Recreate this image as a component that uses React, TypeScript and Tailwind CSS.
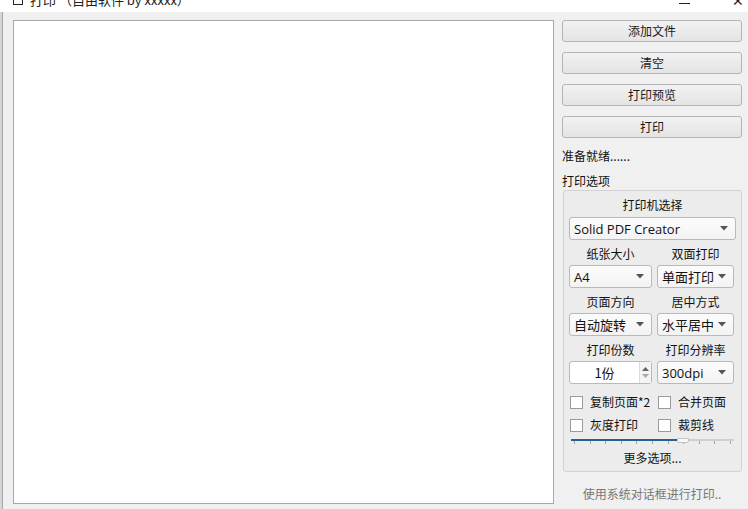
import { ReactNode } from "react";

const cjk = "font-['Microsoft_YaHei','Noto_Sans_CJK_SC',sans-serif]";

function Button({ children }: { children: ReactNode }) {
  return (
    <div className="flex h-[22px] items-center justify-center rounded-[3px] border border-[#b4b4b4] bg-gradient-to-b from-[#f2f2f2] to-[#e4e4e4] text-[12px] leading-[16px] text-[#1a1a1a]">
      {children}
    </div>
  );
}

function Caret() {
  return (
    <svg width="8" height="5" viewBox="0 0 8 5" className="shrink-0">
      <path d="M0 0 L8 0 L4 4.5 Z" fill="#555" />
    </svg>
  );
}

function Select({ value, latin }: { value: string; latin?: boolean }) {
  return (
    <div className="flex h-[23px] items-center justify-between rounded-[3px] border border-[#b9b9b9] bg-gradient-to-b from-[#fcfcfc] to-[#f3f3f3] pl-[4px] pr-[7px]">
      <span
        className={
          latin
            ? "font-['Open_Sans',sans-serif] text-[13px] leading-[16px] text-[#111]"
            : "text-[13px] leading-[16px] text-[#111]"
        }
      >
        {value}
      </span>
      <Caret />
    </div>
  );
}

function Check({ label }: { label: string }) {
  return (
    <div className="flex h-[14px] items-center gap-[7px]">
      <div className="h-[13px] w-[13px] border border-[#9a9a9a] bg-white" />
      <span className="text-[12px] leading-[14px] text-[#111]">{label}</span>
    </div>
  );
}

function Label({ children }: { children: ReactNode }) {
  return <div className="text-center text-[12px] leading-[16px] text-[#111]">{children}</div>;
}

export default function App() {
  return (
    <div className={`flex h-[509px] w-[748px] flex-col overflow-hidden bg-[#f0f0f0] ${cjk}`}>
      {/* title bar, cut off at the top */}
      <div className="-mt-[12px] flex h-[24px] shrink-0 items-center bg-white pl-[13px] pr-[4px]">
        <div className="h-[10px] w-[10px] border border-[#222]" />
        <span className="ml-[7px] text-[13px] leading-[16px] text-[#222]">打印 （自由软件 by xxxxx）</span>
        <div className="ml-auto flex items-center gap-[42px]">
          <div className="mt-[6px] h-[1px] w-[11px] bg-[#222]" />
          <span className="text-[14px] leading-[16px] text-[#222]">✕</span>
        </div>
      </div>

      <div className="flex min-h-0 flex-1">
        {/* desktop edge */}
        <div className="w-[2px] bg-[#d6d6d6]" />
        <div className="w-[1px] bg-[#a8a8a8]" />

        <div className="flex flex-1 gap-[8px] pb-[5px] pl-[10px] pr-[6px] pt-[8px]">
          <div className="w-[541px] border border-[#a8a8a8] bg-white" />

          <div className="flex w-[180px] flex-col">
            <div className="flex flex-col gap-[10px]">
              <Button>添加文件</Button>
              <Button>清空</Button>
              <Button>打印预览</Button>
              <Button>打印</Button>
            </div>
            <div className="mt-[10px] text-[12px] leading-[16px] text-[#111]">准备就绪......</div>
            <div className="mt-[9px] text-[12px] leading-[16px] text-[#111]">打印选项</div>

            <div className="ml-[1px] mt-[1px] flex flex-col rounded-[3px] border border-[#d2d2d2] bg-[#ececec] px-[5px] pb-[5px] pt-[6px]">
              <Label>打印机选择</Label>
              <div className="mt-[4px]">
                <Select value="Solid PDF Creator" latin />
              </div>

              <div className="mt-[6px] grid grid-cols-[83px_77px] gap-x-[5px]">
                <Label>纸张大小</Label>
                <Label>双面打印</Label>
                <div className="mt-[3px]">
                  <Select value="A4" latin />
                </div>
                <div className="mt-[3px]">
                  <Select value="单面打印" />
                </div>
              </div>

              <div className="mt-[6px] grid grid-cols-[83px_77px] gap-x-[5px]">
                <Label>页面方向</Label>
                <Label>居中方式</Label>
                <div className="mt-[3px]">
                  <Select value="自动旋转" />
                </div>
                <div className="mt-[3px]">
                  <Select value="水平居中" />
                </div>
              </div>

              <div className="mt-[6px] grid grid-cols-[83px_77px] gap-x-[5px]">
                <Label>打印份数</Label>
                <Label>打印分辨率</Label>
                <div className="mt-[3px] flex h-[23px] rounded-[3px] border border-[#b9b9b9] bg-white">
                  <div className="flex flex-1 items-center justify-center text-[13px] leading-[16px] text-[#111]">1份</div>
                  <div className="flex w-[12px] flex-col items-center justify-center gap-[3px] border-l border-[#dcdcdc] bg-[#f4f4f4]">
                    <svg width="7" height="4" viewBox="0 0 7 4">
                      <path d="M0 4 L7 4 L3.5 0 Z" fill="#666" />
                    </svg>
                    <svg width="7" height="4" viewBox="0 0 7 4">
                      <path d="M0 0 L7 0 L3.5 4 Z" fill="#aaa" />
                    </svg>
                  </div>
                </div>
                <div className="mt-[3px]">
                  <Select value="300dpi" latin />
                </div>
              </div>

              <div className="mt-[11px] grid grid-cols-[88px_80px] gap-y-[9px] pl-[1px]">
                <Check label="复制页面*2" />
                <Check label="合并页面" />
                <Check label="灰度打印" />
                <Check label="裁剪线" />
              </div>

              {/* slider */}
              <div className="relative mx-[2px] mt-[5px] h-[8px]">
                <div className="absolute left-0 right-0 top-[2px] h-[2px] bg-[#cfcfcf]" />
                <div className="absolute left-0 top-[2px] h-[2px] w-[106px] bg-[#2a5f95]" />
                <div className="absolute left-0 right-0 top-[4px] flex justify-between px-[3px]">
                  {[0, 1, 2, 3, 4, 5, 6, 7, 8, 9, 10].map((i) => (
                    <div key={i} className="h-[3px] w-[1px] bg-[#a5a5a5]" />
                  ))}
                </div>
                <div className="absolute left-[106px] top-[1px] h-[5px] w-[12px] rounded-b-[2px] border border-[#c4c4c4] bg-[#f7f7f7]" />
              </div>

              <div className="mt-[5px] text-center text-[12px] leading-[16px] text-[#111]">更多选项...</div>
            </div>

            <div className="mt-[14px] text-center text-[12px] leading-[16px] text-[#777]">使用系统对话框进行打印..</div>
          </div>
        </div>
      </div>
    </div>
  );
}
